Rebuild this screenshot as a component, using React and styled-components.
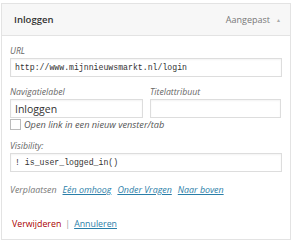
import React from "react";
import styled, { createGlobalStyle } from "styled-components";

const Global = createGlobalStyle`
  html, body { margin: 0; padding: 0; background: #fff; }
  body { font-family: "Open Sans", "Noto Sans", sans-serif; }
`;

const Page = styled.div`
  padding: 3px 0 0 1px;
  width: 290px;
`;

const Header = styled.div`
  display: flex;
  align-items: center;
  height: 31px;
  padding: 0 0 0 12px;
  background: #f7f7f7;
  border: 1px solid #e3e3e3;
  box-sizing: content-box;
`;

const Title = styled.div`
  flex: 1;
  font-size: 9.5px;
  font-weight: 600;
  color: #333;
`;

const Meta = styled.div`
  font-size: 9px;
  color: #777;
  margin-right: 6px;
`;

const Arrow = styled.div`
  font-size: 5px;
  color: #aaa;
  width: 14px;
`;

const Body = styled.div`
  border: 1px solid #e3e3e3;
  border-top: none;
  padding: 9px 8px 8px 8px;
  display: flex;
  flex-direction: column;
`;

const Label = styled.div`
  font-size: 8.7px;
  font-style: italic;
  color: #666;
  line-height: 12px;
  margin-bottom: 1px;
`;

const Input = styled.div`
  height: 17px;
  border: 1px solid #ddd;
  box-shadow: inset 0 1px 2px rgba(0,0,0,0.05);
  display: flex;
  align-items: center;
  padding: 0 4px;
  font-family: ${(p) => (p.$mono ? '"Liberation Mono", monospace' : '"Open Sans", sans-serif')};
  font-size: ${(p) => (p.$mono ? "8.2px" : "10.5px")};
  color: #333;
  white-space: nowrap;
  overflow: hidden;
`;

const Field = styled.div`
  display: flex;
  flex-direction: column;
  margin-top: ${(p) => p.$mt || 0}px;
`;

const Row = styled.div`
  display: grid;
  grid-template-columns: 133px 131px;
  column-gap: 7px;
  margin-top: 9px;
`;

const CheckRow = styled.div`
  display: flex;
  align-items: center;
  height: 12px;
  gap: 3px;
`;

const Box = styled.div`
  width: 9px;
  height: 9px;
  border: 1px solid #bbb;
  background: #fff;
`;

const CheckText = styled.span`
  font-size: 9.2px;
  font-style: italic;
  color: #555;
`;

const MoveRow = styled.div`
  display: flex;
  gap: 6px;
  margin-top: 12px;
  font-size: 8.9px;
  font-style: italic;
  line-height: 12px;
`;

const Muted = styled.span`
  color: #777;
`;

const Link = styled.a`
  color: ${(p) => (p.$danger ? "#a00" : "#2a7ea8")};
  text-decoration: ${(p) => (p.$danger ? "none" : "underline")};
  cursor: pointer;
`;

const Actions = styled.div`
  display: flex;
  align-items: center;
  gap: 4px;
  margin-top: 22px;
  padding-left: 2px;
  font-size: 8.8px;
  line-height: 13px;
`;

const Sep = styled.span`
  color: #999;
`;

export default function App() {
  return (
    <>
      <Global />
      <Page>
        <Header>
          <Title>Inloggen</Title>
          <Meta>Aangepast</Meta>
          <Arrow>▲</Arrow>
        </Header>
        <Body>
          <Field>
            <Label>URL</Label>
            <Input $mono>http://www.mijnnieuwsmarkt.nl/login</Input>
          </Field>
          <Row>
            <Field>
              <Label>Navigatielabel</Label>
              <Input>Inloggen</Input>
            </Field>
            <Field>
              <Label>Titelattribuut</Label>
              <Input />
            </Field>
          </Row>
          <CheckRow>
            <Box />
            <CheckText>Open link in een nieuw venster/tab</CheckText>
          </CheckRow>
          <Field $mt={10}>
            <Label>Visibility:</Label>
            <Input $mono>! is_user_logged_in()</Input>
          </Field>
          <MoveRow>
            <Muted>Verplaatsen</Muted>
            <Link>Eén omhoog</Link>
            <Link>Onder Vragen</Link>
            <Link>Naar boven</Link>
          </MoveRow>
          <Actions>
            <Link $danger>Verwijderen</Link>
            <Sep>|</Sep>
            <Link>Annuleren</Link>
          </Actions>
        </Body>
      </Page>
    </>
  );
}
